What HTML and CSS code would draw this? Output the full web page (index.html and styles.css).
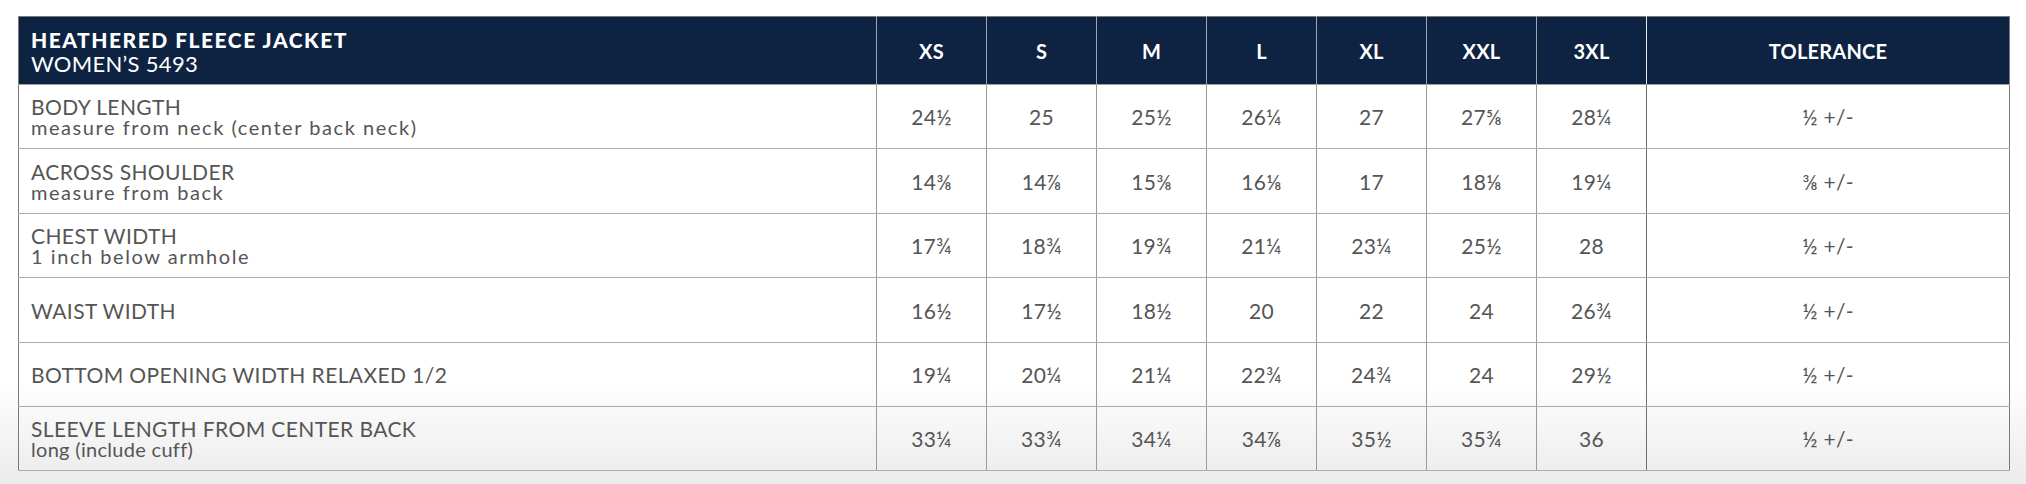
FILE: index.html
```html
<!DOCTYPE html>
<html lang="en">
<head>
<meta charset="utf-8">
<title>Heathered Fleece Jacket – Women's 5493 Size Chart</title>
<link rel="stylesheet" href="styles.css">
</head>
<body>
<main class="page">
  <table class="chart">
    <colgroup>
      <col class="col-label">
      <col class="col-size"><col class="col-size"><col class="col-size"><col class="col-size">
      <col class="col-size"><col class="col-size"><col class="col-size">
      <col class="col-tol">
    </colgroup>
    <thead>
      <tr class="head-row">
        <th class="title-cell">
          <div class="title">HEATHERED FLEECE JACKET</div>
          <div class="subtitle">WOMEN’S 5493</div>
        </th>
        <th class="size-head">XS</th>
        <th class="size-head">S</th>
        <th class="size-head">M</th>
        <th class="size-head">L</th>
        <th class="size-head">XL</th>
        <th class="size-head">XXL</th>
        <th class="size-head">3XL</th>
        <th class="size-head tol-head">TOLERANCE</th>
      </tr>
    </thead>
    <tbody>
      <tr class="row r64">
        <td class="label"><div class="name">BODY LENGTH</div><div class="note">measure from neck (center back neck)</div></td>
        <td class="num">24½</td><td class="num">25</td><td class="num">25½</td><td class="num">26¼</td><td class="num">27</td><td class="num">27⅝</td><td class="num">28¼</td>
        <td class="num tol">½ +/-</td>
      </tr>
      <tr class="row r65">
        <td class="label"><div class="name">ACROSS SHOULDER</div><div class="note">measure from back</div></td>
        <td class="num">14⅜</td><td class="num">14⅞</td><td class="num">15⅜</td><td class="num">16⅛</td><td class="num">17</td><td class="num">18⅛</td><td class="num">19¼</td>
        <td class="num tol">⅜ +/-</td>
      </tr>
      <tr class="row r64">
        <td class="label"><div class="name">CHEST WIDTH</div><div class="note">1 inch below armhole</div></td>
        <td class="num">17¾</td><td class="num">18¾</td><td class="num">19¾</td><td class="num">21¼</td><td class="num">23¼</td><td class="num">25½</td><td class="num">28</td>
        <td class="num tol">½ +/-</td>
      </tr>
      <tr class="row r65">
        <td class="label"><div class="name">WAIST WIDTH</div></td>
        <td class="num">16½</td><td class="num">17½</td><td class="num">18½</td><td class="num">20</td><td class="num">22</td><td class="num">24</td><td class="num">26¾</td>
        <td class="num tol">½ +/-</td>
      </tr>
      <tr class="row r64">
        <td class="label"><div class="name">BOTTOM OPENING WIDTH RELAXED 1/2</div></td>
        <td class="num">19¼</td><td class="num">20¼</td><td class="num">21¼</td><td class="num">22¾</td><td class="num">24¾</td><td class="num">24</td><td class="num">29½</td>
        <td class="num tol">½ +/-</td>
      </tr>
      <tr class="row r64">
        <td class="label"><div class="name">SLEEVE LENGTH FROM CENTER BACK</div><div class="note note-tight">long (include cuff)</div></td>
        <td class="num">33¼</td><td class="num">33¾</td><td class="num">34¼</td><td class="num">34⅞</td><td class="num">35½</td><td class="num">35¾</td><td class="num">36</td>
        <td class="num tol">½ +/-</td>
      </tr>
    </tbody>
  </table>
</main>
</body>
</html>
```
FILE: styles.css
```css
html, body {
  margin: 0;
  padding: 0;
}

body {
  width: 2026px;
  height: 484px;
  overflow: hidden;
  background: linear-gradient(to bottom, #ffffff 0, #ffffff 380px, #ebebeb 484px);
  font-family: "Lato", "Liberation Sans", sans-serif;
}

.page {
  padding: 16px 0 0 18px;
}

.chart {
  border-collapse: collapse;
  table-layout: fixed;
  width: 1991px;
  border: 1px solid #7a7a7a;
}

.col-label { width: 858px; }
.col-size { width: 110px; }
.col-tol { width: 363px; }

.head-row th {
  height: 65px;
  padding: 0;
  background: #0d2341;
  color: #ffffff;
  border-left: 1px solid #9ea6b1;
  border-bottom: 1px solid #a0a0a0;
  vertical-align: middle;
}

.head-row th:first-child {
  border-left: 1px solid #7a7a7a;
}

.title-cell {
  text-align: left;
  padding-left: 12px !important;
  padding-top: 2px !important;
}

.title {
  font-weight: 900;
  font-size: 21px;
  line-height: 23px;
  letter-spacing: 1.5px;
}

.subtitle {
  font-weight: 400;
  font-size: 22px;
  line-height: 25px;
  letter-spacing: 0.3px;
}

.size-head {
  font-weight: 700;
  font-size: 20px;
  text-align: center;
  letter-spacing: 0.2px;
}

.head-row .tol-head {
  border-left-color: #e6e8ec;
}

.row td {
  padding: 0;
  border-left: 1px solid #9a9a9a;
  border-bottom: 1px solid #ababab;
  color: #555555;
  vertical-align: middle;
}

.row td:first-child {
  border-left: 1px solid #7a7a7a;
}

.row td.tol {
  border-left-color: #6f6f6f;
}

.r64 td { height: 63px; }
.r65 td { height: 64px; }

.label {
  padding-left: 12px !important;
  text-align: left;
}

.name {
  font-size: 21px;
  line-height: 21px;
  letter-spacing: 0.4px;
}

.note {
  font-size: 20px;
  line-height: 20px;
  letter-spacing: 1.55px;
}

.note-tight {
  letter-spacing: 0.3px;
}

.num {
  text-align: center;
  font-size: 21px;
  letter-spacing: 0.3px;
}
```
